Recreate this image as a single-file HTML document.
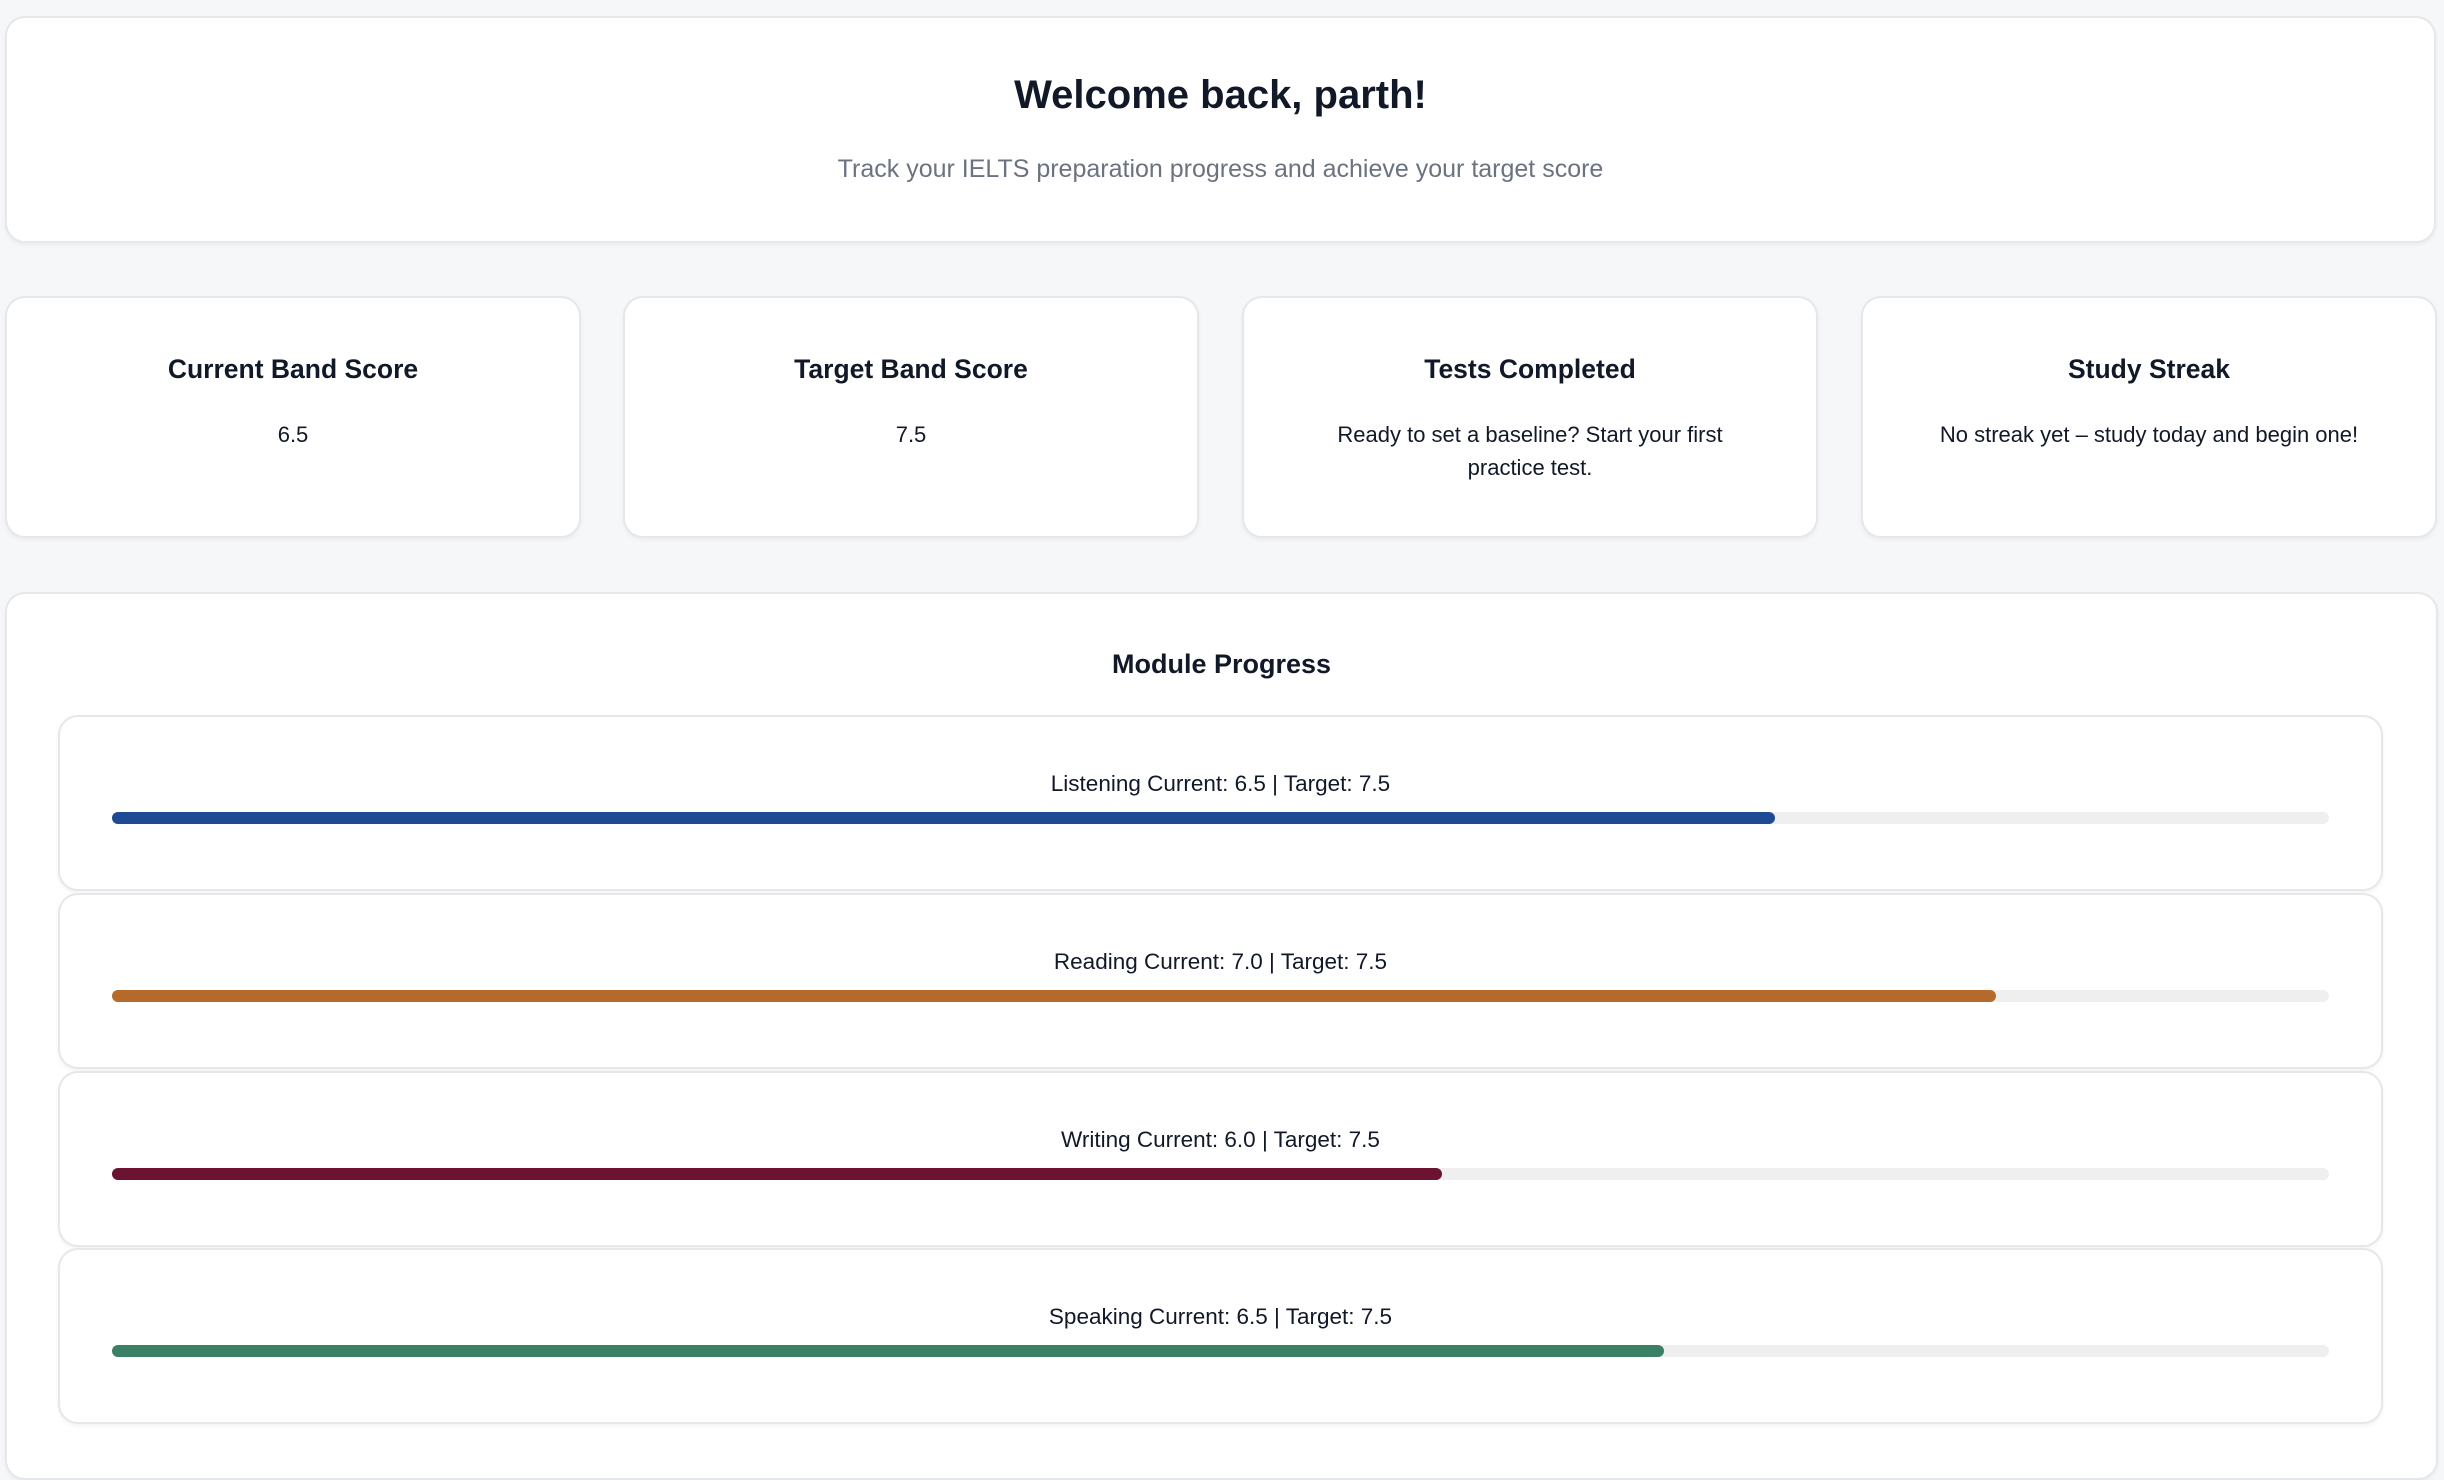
<!DOCTYPE html>
<html><head><meta charset="utf-8"><style>
*{box-sizing:border-box;margin:0;padding:0}
body{width:2444px;height:1480px;background:#f6f7f9;font-family:"Liberation Sans",sans-serif;color:#111827;position:relative;overflow:hidden}
.card{position:absolute;background:#fff;border:2px solid #e6e7ea;border-radius:20px;box-shadow:0 2px 4px rgba(0,0,0,0.05)}
h1{position:absolute;left:0;right:0;font-size:40px;font-weight:700;text-align:center;color:#111827}
.sub{position:absolute;left:0;right:0;font-size:25px;color:#6b7280;text-align:center}
.st{top:296px;height:242px;width:576px}
.st h3{position:absolute;left:0;right:0;top:56px;font-size:26.5px;font-weight:600;text-align:center}
.st p{position:absolute;left:60px;right:60px;top:120px;font-size:22px;line-height:33px;text-align:center}
.mod{left:58px;width:2325px;height:176px}
.mod .lbl{position:absolute;left:0;right:0;top:54px;font-size:22.5px;text-align:center}
.track{position:absolute;left:52px;width:2217px;top:95px;height:12px;background:#efefef;border-radius:6px}
.fill{height:12px;border-radius:6px}
</style></head><body>
<div class="card" style="left:5px;top:16px;width:2431px;height:227px">
<h1 style="top:55px">Welcome back, parth!</h1>
<div class="sub" style="top:137px">Track your IELTS preparation progress and achieve your target score</div>
</div>
<div class="card st" style="left:5px"><h3>Current Band Score</h3><p>6.5</p></div>
<div class="card st" style="left:623px"><h3>Target Band Score</h3><p>7.5</p></div>
<div class="card st" style="left:1242px"><h3>Tests Completed</h3><p>Ready to set a baseline? Start your first practice test.</p></div>
<div class="card st" style="left:1861px"><h3>Study Streak</h3><p style="left:20px;right:20px">No streak yet – study today and begin one!</p></div>
<div class="card" style="left:5px;top:592px;width:2433px;height:888px">
<div style="position:absolute;left:0;right:0;top:55px;font-size:27px;font-weight:600;text-align:center">Module Progress</div>
</div>
<div class="card mod" style="top:715px"><div class="lbl">Listening Current: 6.5 | Target: 7.5</div><div class="track"><div class="fill" style="width:75%;background:#1e4a94"></div></div></div>
<div class="card mod" style="top:893px"><div class="lbl">Reading Current: 7.0 | Target: 7.5</div><div class="track"><div class="fill" style="width:85%;background:#b5692a"></div></div></div>
<div class="card mod" style="top:1071px"><div class="lbl">Writing Current: 6.0 | Target: 7.5</div><div class="track"><div class="fill" style="width:60%;background:#6b1330"></div></div></div>
<div class="card mod" style="top:1248px"><div class="lbl">Speaking Current: 6.5 | Target: 7.5</div><div class="track"><div class="fill" style="width:70%;background:#3a8064"></div></div></div>
</body></html>
